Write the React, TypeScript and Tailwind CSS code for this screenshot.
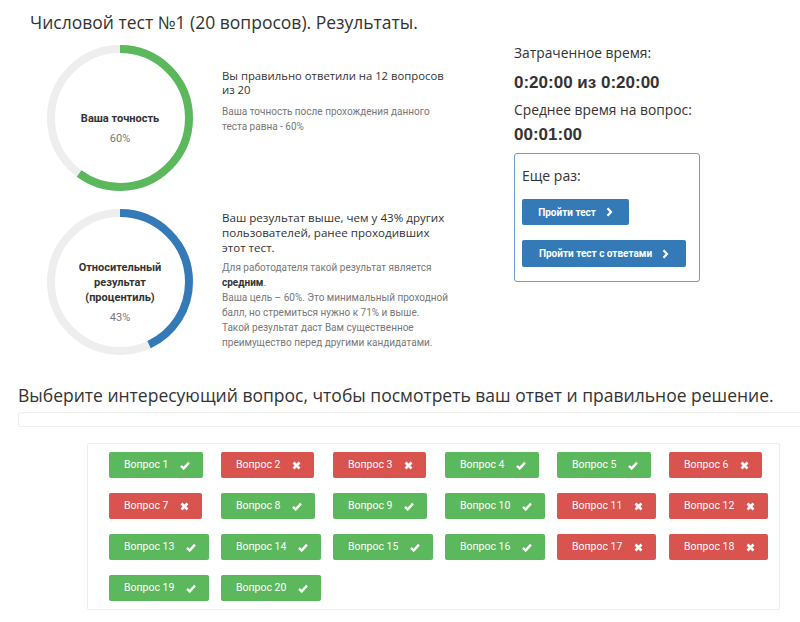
import React from "react";

const Check = () => (
  <svg width="10" height="9" viewBox="0 0 10 9" className="shrink-0">
    <path d="M1 4.8 L3.7 7.4 L9 1.6" fill="none" stroke="white" strokeWidth="2.4" strokeLinejoin="miter" />
  </svg>
);
const Cross = () => (
  <svg width="9" height="9" viewBox="0 0 9 9" className="shrink-0">
    <path d="M1.5 1.5 L7.5 7.5 M7.5 1.5 L1.5 7.5" stroke="white" strokeWidth="2.6" strokeLinecap="butt" />
  </svg>
);
const Chevron = () => (
  <svg width="7" height="10" viewBox="0 0 7 10" className="shrink-0">
    <path d="M1.5 1.3 L5 5 L1.5 8.7" fill="none" stroke="white" strokeWidth="2.2" />
  </svg>
);

function Ring({ pct, color, children }: { pct: number; color: string; children: React.ReactNode }) {
  const r = 69;
  const c = 2 * Math.PI * r;
  return (
    <div className="relative w-[146px] h-[146px] shrink-0">
      <svg width="146" height="146" viewBox="0 0 146 146" className="absolute inset-0">
        <circle cx="73" cy="73" r={r} fill="none" stroke="#eeeeee" strokeWidth="8" />
        <circle
          cx="73"
          cy="73"
          r={r}
          fill="none"
          stroke={color}
          strokeWidth="8"
          strokeDasharray={`${(c * pct) / 100} ${c}`}
          transform="rotate(-90 73 73)"
        />
      </svg>
      <div className="relative h-full flex flex-col items-center justify-center pt-[20px] text-center font-['Roboto',sans-serif] text-[11px] leading-[15px]">
        {children}
      </div>
    </div>
  );
}

const questions = [
  true, false, false, true, true, false,
  false, true, true, true, false, false,
  true, true, true, true, false, false,
  true, true,
];

export default function App() {
  return (
    <div className="w-[800px] h-[622px] overflow-hidden bg-white text-[#333] font-['Open_Sans',sans-serif]">
      <h1 className="pl-[30px] pt-[10px] text-[17.5px] leading-[24px] font-normal">
        Числовой тест №1 (20 вопросов). Результаты.
      </h1>
      <div className="flex mt-[11px]">
        <div className="w-[514px] pl-[47px] flex flex-col gap-[18px]">
          <div className="flex">
            <Ring pct={60} color="#5cb85c">
              <div className="font-bold text-[#333]">Ваша точность</div>
              <div className="text-[#777] mt-[5px]">60%</div>
            </Ring>
            <div className="ml-[29px] pt-[24px] w-[250px]">
              <p className="text-[11.3px] leading-[14px] text-[#333] whitespace-nowrap">
                Вы правильно ответили на 12 вопросов
                <br />
                из 20
              </p>
              <p className="mt-[7px] text-[10px] leading-[15px] text-[#777] font-['Roboto',sans-serif] whitespace-nowrap">
                Ваша точность после прохождения данного
                <br />
                теста равна - 60%
              </p>
            </div>
          </div>
          <div className="flex">
            <Ring pct={43} color="#337ab7">
              <div className="font-bold text-[#333]">Относительный</div>
              <div className="font-bold text-[#333]">результат</div>
              <div className="font-bold text-[#333]">(процентиль)</div>
              <div className="text-[#777] mt-[5px]">43%</div>
            </Ring>
            <div className="ml-[29px] pt-[1px] w-[250px]">
              <p className="text-[11.6px] leading-[15px] text-[#333] whitespace-nowrap">
                Ваш результат выше, чем у 43% других
                <br />
                пользователей, ранее проходивших
                <br />
                этот тест.
              </p>
              <p className="mt-[5px] text-[10px] leading-[15px] text-[#777] font-['Roboto',sans-serif] whitespace-nowrap">
                Для работодателя такой результат является
                <br />
                <b className="text-[#333]">средним</b>.
                <br />
                Ваша цель – 60%. Это минимальный проходной
                <br />
                балл, но стремиться нужно к 71% и выше.
                <br />
                Такой результат даст Вам существенное
                <br />
                преимущество перед другими кандидатами.
              </p>
            </div>
          </div>
        </div>
        <div className="w-[186px]">
          <div className="text-[13.8px] leading-[20px] -mt-[2px]">Затраченное время:</div>
          <div className="text-[17px] leading-[24px] mt-[8px] font-bold font-['Liberation_Sans',sans-serif]">0:20:00 из 0:20:00</div>
          <div className="text-[13.8px] leading-[20px] mt-[5px]">Среднее время на вопрос:</div>
          <div className="text-[17px] leading-[22px] mt-[4px] font-bold font-['Liberation_Sans',sans-serif]">00:01:00</div>
          <div className="mt-[7px] border border-[#6a9ed0] rounded-[3px] h-[129px] px-[7px] pt-[12px]">
            <div className="text-[14px] leading-[20px]">Еще раз:</div>
            <button className="mt-[13px] h-[26px] w-[107px] bg-[#337ab7] text-white text-[10px] font-bold font-['Roboto',sans-serif] flex items-center justify-center gap-[10px] rounded-[2px]">
              Пройти тест <Chevron />
            </button>
            <button className="mt-[15px] h-[27px] w-[164px] bg-[#337ab7] text-white text-[10px] font-bold font-['Roboto',sans-serif] flex items-center justify-center gap-[10px] rounded-[2px]">
              Пройти тест с ответами <Chevron />
            </button>
          </div>
        </div>
      </div>
      <h2 className="pl-[18px] mt-[28px] text-[17.5px] leading-[24px] font-normal whitespace-nowrap">
        Выберите интересующий вопрос, чтобы посмотреть ваш ответ и правильное решение.
      </h2>
      <div className="ml-[18px] mt-[5px] w-[800px] h-[15px] border border-[#eeeeee] rounded-[2px]" />
      <div className="ml-[87px] w-[693px] mt-[16px] h-[167px] border border-[#eeeeee] rounded-[2px] pl-[21px] pt-[8px]">
        <div className="grid grid-cols-[repeat(6,112px)] gap-y-[15px]">
          {questions.map((ok, i) => (
            <button
              key={i}
              className={`justify-self-start h-[26px] pl-[15px] pr-[13px] flex items-center gap-[12px] rounded-[2px] text-white text-[10.5px] font-['Roboto',sans-serif] ${
                ok ? "bg-[#5cb85c]" : "bg-[#d9534f]"
              }`}
            >
              Вопрос {i + 1}
              {ok ? <Check /> : <Cross />}
            </button>
          ))}
        </div>
      </div>
    </div>
  );
}
